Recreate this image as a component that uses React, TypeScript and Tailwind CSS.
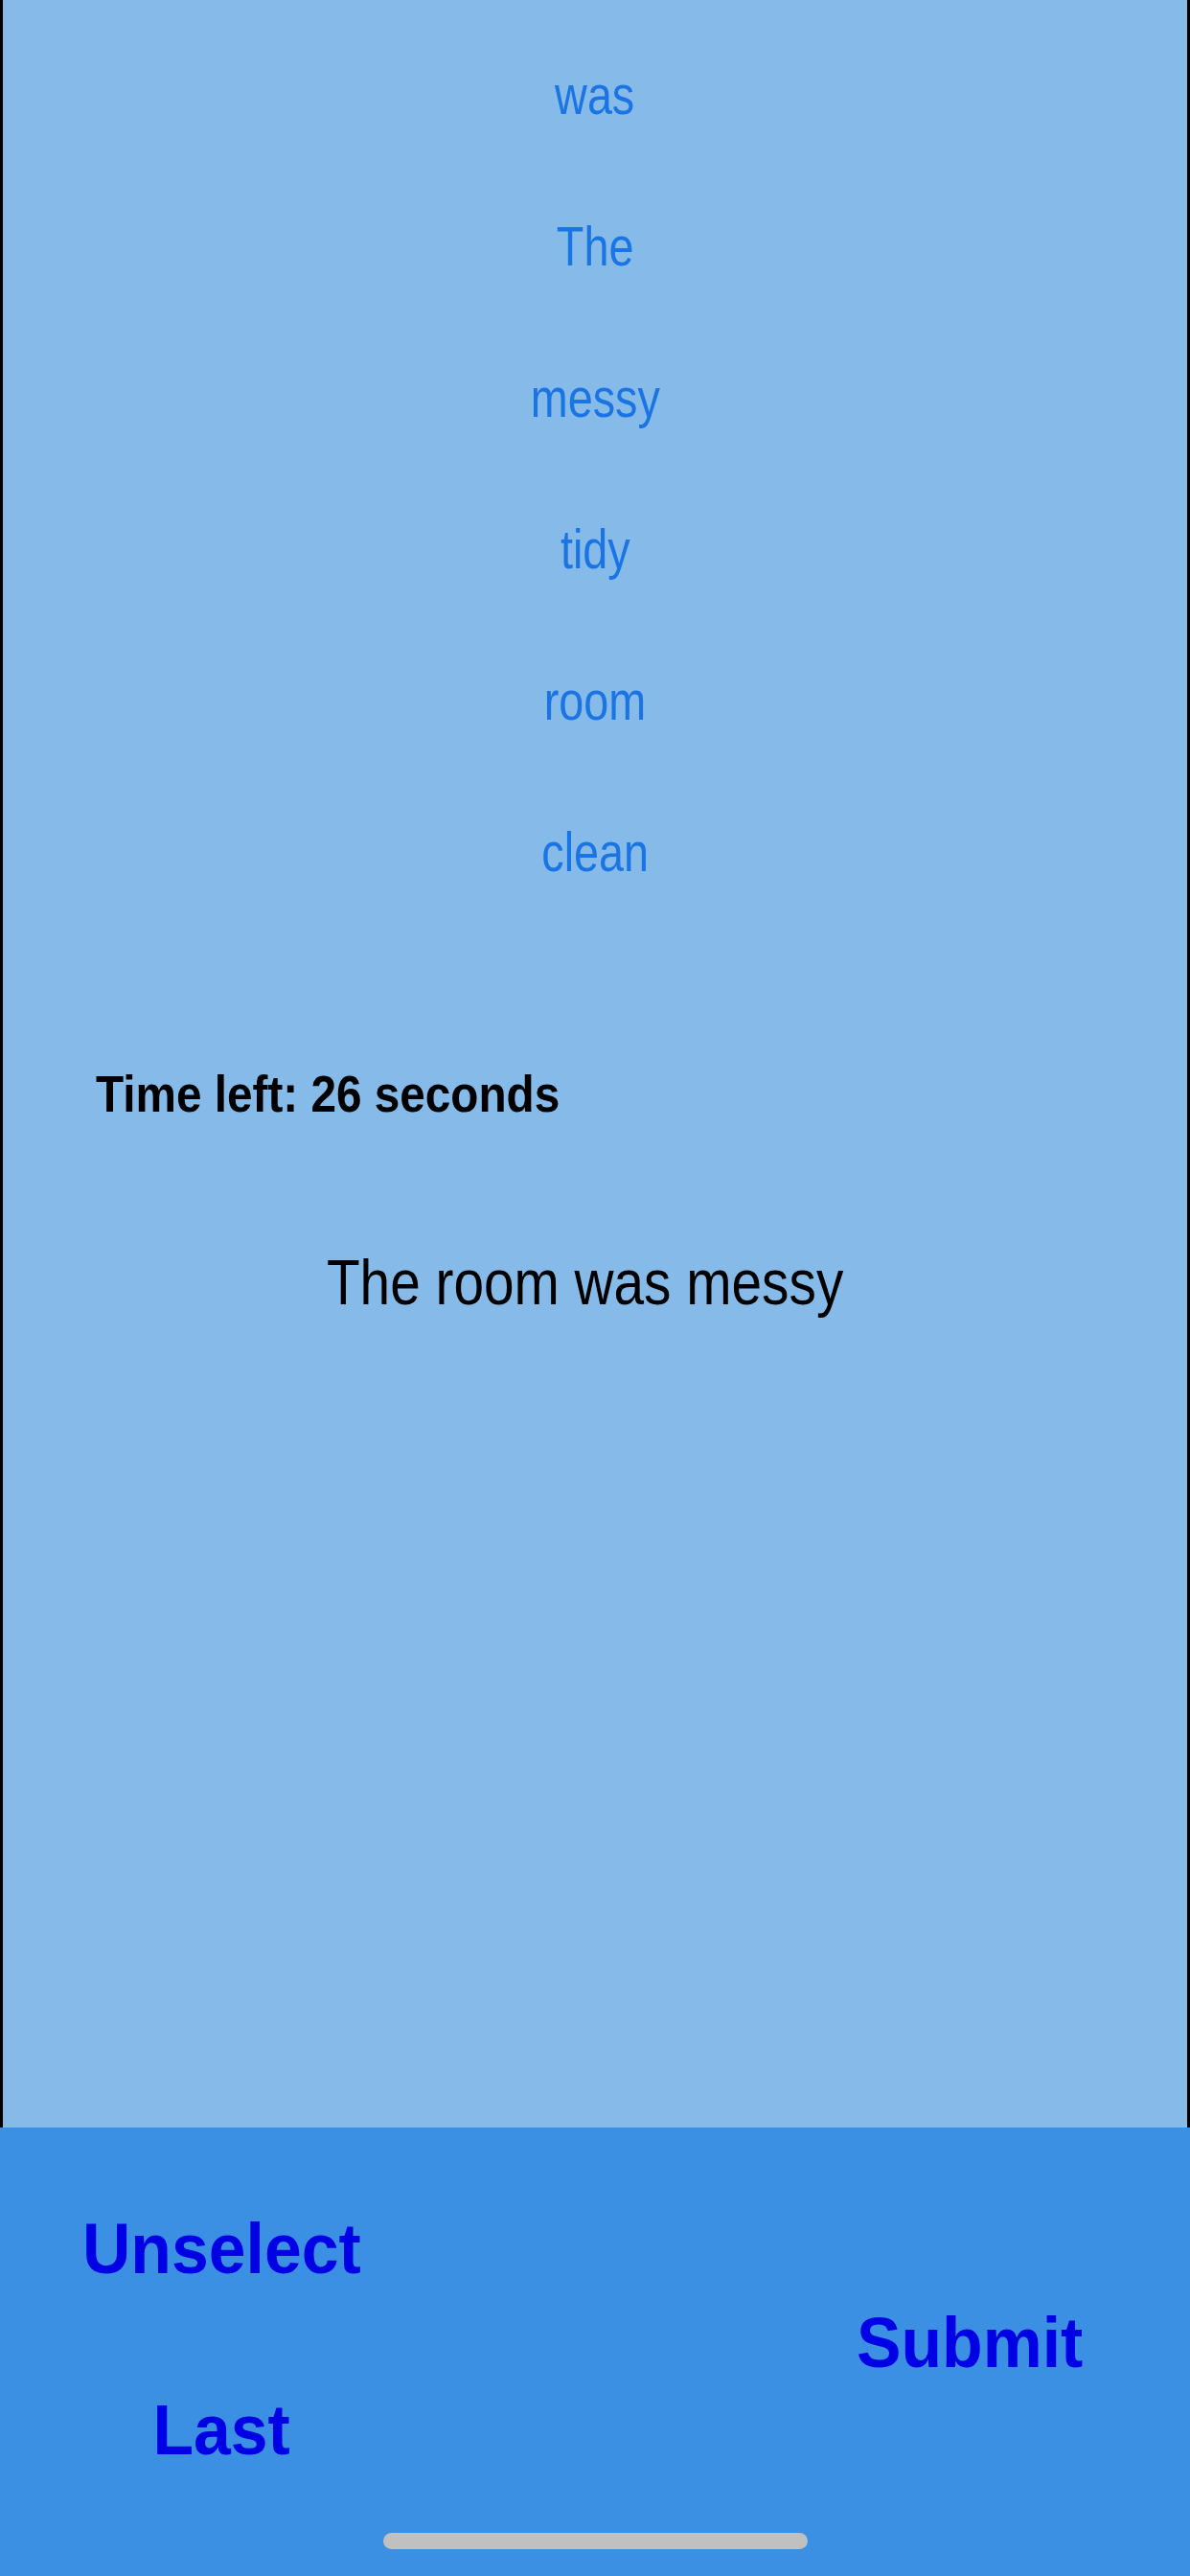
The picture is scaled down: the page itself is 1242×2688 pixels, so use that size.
const words = ["was", "The", "messy", "tidy", "room", "clean"];

export default function App() {
  return (
    <div className="flex h-[2688px] w-[1242px] flex-col bg-[#86bbe9] font-['Liberation_Sans',Arial,sans-serif]">
      <div className="flex h-[2220px] flex-col border-x-[3px] border-black">
        {/* word choices */}
        <div className="flex flex-col pt-[20px]">
          {words.map((w) => (
            <div key={w} className="flex h-[158px] items-center justify-center">
              <span className="inline-block scale-x-[0.82] text-[57px] leading-none text-[#1b74e4]">{w}</span>
            </div>
          ))}
        </div>

        <div className="mt-[147px] pl-[97px]">
          <span className="inline-block origin-left scale-x-[0.9] text-[53px] font-bold leading-none text-black">
            Time left: 26 seconds
          </span>
        </div>

        <div className="mt-[137px] flex justify-center pr-[20px]">
          <span className="inline-block scale-x-[0.86] text-[66px] leading-none text-black">The room was messy</span>
        </div>
      </div>

      {/* bottom actions */}
      <div className="relative flex flex-1 justify-between bg-[#3b90e3]">
        <div className="flex w-[462px] flex-col items-center gap-[114px] pt-[89px]">
          <button className="inline-block scale-x-[0.93] text-[75px] font-bold leading-none text-[#0000e5]">Unselect</button>
          <button className="inline-block scale-x-[0.93] text-[75px] font-bold leading-none text-[#0000e5]">Last</button>
        </div>
        <div className="flex w-[460px] justify-center pt-[187px]">
          <button className="inline-block h-[75px] scale-x-[0.93] text-[75px] font-bold leading-none text-[#0000e5]">Submit</button>
        </div>
        <div className="absolute bottom-[28px] left-[400px] h-[17px] w-[443px] rounded-full bg-[#c0c0c0]" />
      </div>
    </div>
  );
}
